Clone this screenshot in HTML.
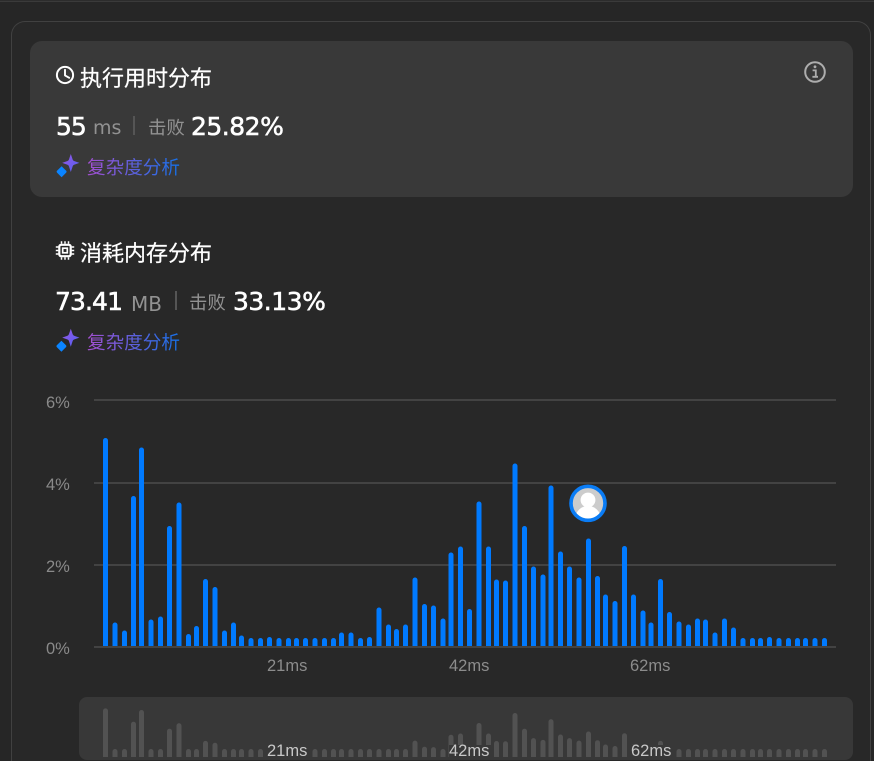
<!DOCTYPE html>
<html><head><meta charset="utf-8">
<style>
html,body{margin:0;padding:0;width:874px;height:761px;overflow:hidden;background:#262626}
body{position:relative;font-family:"Liberation Sans","Noto Sans CJK SC",sans-serif}
.a{position:absolute;white-space:nowrap;line-height:1}
.top{left:0;top:0;width:874px;height:2px;background:#2c2c2c;border-bottom:1px solid #3a3a3a;box-sizing:border-box}
.card{left:11px;top:21px;width:860px;height:740px;box-sizing:border-box;border:1px solid #414141;border-bottom:none;border-radius:14px 14px 0 0;background:#282828}
.panel{left:30px;top:41px;width:823px;height:156px;border-radius:12px;background:#393939}
.t{font-family:"Noto Sans CJK SC",sans-serif;font-size:22px;color:#fff;font-weight:400;-webkit-text-stroke:.2px #fff}
.n{font-family:"DejaVu Sans",sans-serif;font-size:25px;color:#fff;font-weight:400;-webkit-text-stroke:.55px #fff;letter-spacing:-.5px}
.u{font-family:"DejaVu Sans",sans-serif;font-size:19px;color:#929292}
.c{font-family:"Noto Sans CJK SC",sans-serif;font-size:18.4px;color:#929292}
.d{width:2px;height:19px;background:#555}
.g{font-family:"Noto Sans CJK SC",sans-serif;font-size:18.6px;background:linear-gradient(90deg,#a44fd0,#1571e8);-webkit-background-clip:text;background-clip:text;color:transparent}
.y{font-size:16.5px;color:#8a8a8a}
.x{font-size:16.5px;color:#8c8c8c}
.mp{left:79px;top:697px;width:774px;height:63px;border-radius:8px;background:#383838}
.mx{font-size:16.5px;color:#c8c8c8}
.mk{top:745px;width:43px;height:13px;background:#383838}
.l{left:94px;width:742px;height:2px;background:#434343}
svg{position:absolute;left:0;top:0}
#b rect{width:5px;rx:2.5px;fill:#007aff;height:260px}
#m rect{width:5px;rx:2.5px;fill:#525252;height:60px}
</style></head>
<body>
<div class="a top"></div>
<div class="a card"></div>
<div class="a panel"></div>

<svg width="874" height="761" fill="none">
<circle cx="65" cy="75" r="8.1" stroke="#fff" stroke-width="2"/>
<path d="M65 69.8v5.6l4.2 2.4" stroke="#fff" stroke-width="1.9" stroke-linecap="round" stroke-linejoin="round"/>
<circle cx="815" cy="72" r="9.8" stroke="#adadad" stroke-width="2"/>
<circle cx="815" cy="66.8" r="1.4" fill="#adadad"/>
<path d="M812.6 70.4h3.2v6M812.4 76.8h5.6" stroke="#adadad" stroke-width="1.8"/>
<rect x="59.3" y="244.8" width="11.4" height="11.4" rx="1.8" stroke="#fff" stroke-width="2.2"/>
<rect x="62.7" y="248.2" width="4.6" height="4.6" stroke="#fff" stroke-width="1.7"/>
<path d="M61.5 241.2v2.6M65 241.2v2.6M68.5 241.2v2.6M61.5 257.2v2.6M65 257.2v2.6M68.5 257.2v2.6M55.8 247h2.6M55.8 250.5h2.6M55.8 254h2.6M71.6 247h2.6M71.6 250.5h2.6M71.6 254h2.6" stroke="#fff" stroke-width="1.5"/>
<defs><linearGradient id="s" x1="0" y1="0" x2="1" y2="1"><stop offset="0" stop-color="#9a55e6"/><stop offset="1" stop-color="#4f62f2"/></linearGradient></defs>
<path d="M70.8 154l1.9 5.6q.4 1 1.4 1.4l5.3 1.9-5.3 1.9q-1 .4-1.4 1.4l-1.9 5.8-1.9-5.8q-.4-1-1.4-1.4l-5.3-1.9 5.3-1.9q1-.4 1.4-1.4z" fill="url(#s)"/>
<path d="M61.6 166.2l4.6 4.6q.9.9 0 1.8l-4.6 4.6-4.6-4.6q-.9-.9 0-1.8z" fill="#0a84ff"/>
<path d="M70.8 328.7l1.9 5.6q.4 1 1.4 1.4l5.3 1.9-5.3 1.9q-1 .4-1.4 1.4l-1.9 5.8-1.9-5.8q-.4-1-1.4-1.4l-5.3-1.9 5.3-1.9q1-.4 1.4-1.4z" fill="url(#s)"/>
<path d="M61.4 340.7l4.6 4.6q.9.9 0 1.8l-4.6 4.6-4.6-4.6q-.9-.9 0-1.8z" fill="#0a84ff"/>
</svg>

<div class="a t" style="left:80px;top:66px">执行用时分布</div>
<div class="a n" style="left:56px;top:114px;letter-spacing:-1px">55</div>
<div class="a u" style="left:93px;top:119px">ms</div>
<div class="a d" style="left:133px;top:116px"></div>
<div class="a c" style="left:148px;top:118px">击败</div>
<div class="a n" style="left:191px;top:114px">25.82%</div>
<div class="a g" style="left:87px;top:158px">复杂度分析</div>

<div class="a t" style="left:80px;top:241px">消耗内存分布</div>
<div class="a n" style="left:55px;top:289px;letter-spacing:-.9px">73.41</div>
<div class="a u" style="left:131px;top:294px;font-size:20px">MB</div>
<div class="a d" style="left:175px;top:291px"></div>
<div class="a c" style="left:189px;top:293px">击败</div>
<div class="a n" style="left:233px;top:289px">33.13%</div>
<div class="a g" style="left:87px;top:333px">复杂度分析</div>

<div class="a l" style="top:399px"></div>
<div class="a l" style="top:482px"></div>
<div class="a l" style="top:564px"></div>
<div class="a l" style="top:645.5px"></div>
<div class="a y" style="left:46px;top:395px">6%</div>
<div class="a y" style="left:46px;top:477px">4%</div>
<div class="a y" style="left:46px;top:559px">2%</div>
<div class="a y" style="left:46px;top:641px">0%</div>

<svg id="b" width="874" height="646">
<rect x="103" y="438"/><rect x="112.5" y="622.5"/><rect x="122" y="630.5"/><rect x="131" y="496"/><rect x="139" y="447.5"/><rect x="148.5" y="619.5"/><rect x="158" y="616.5"/><rect x="167" y="526"/><rect x="176.5" y="502.5"/><rect x="186" y="634"/><rect x="194" y="626"/><rect x="203" y="579"/><rect x="212.5" y="587"/><rect x="222" y="630.5"/><rect x="231" y="622.5"/><rect x="239" y="635.5"/><rect x="248.5" y="638"/><rect x="258" y="638"/><rect x="267" y="637"/><rect x="276.5" y="638"/><rect x="286" y="638"/><rect x="294" y="638"/><rect x="303" y="638"/><rect x="312.5" y="638"/><rect x="322" y="638"/><rect x="331" y="638"/><rect x="339" y="632.5"/><rect x="348.5" y="632.5"/><rect x="358" y="638"/><rect x="367" y="637"/><rect x="376.5" y="607.5"/><rect x="386" y="624.5"/><rect x="394" y="629"/><rect x="403" y="624.5"/><rect x="412.5" y="577.5"/><rect x="422" y="604"/><rect x="431" y="605.5"/><rect x="440.5" y="618.5"/><rect x="448.5" y="552.5"/><rect x="458" y="546.5"/><rect x="467" y="609"/><rect x="476.5" y="501.5"/><rect x="486" y="546.5"/><rect x="494" y="579.5"/><rect x="503" y="580.5"/><rect x="512.5" y="463.5"/><rect x="522" y="526"/><rect x="531" y="566.5"/><rect x="540.5" y="574.5"/><rect x="548.5" y="485.5"/><rect x="558" y="551.5"/><rect x="567" y="566.5"/><rect x="576.5" y="577.5"/><rect x="586" y="538.5"/><rect x="595" y="576"/><rect x="603" y="594.5"/><rect x="612.5" y="601"/><rect x="622" y="546"/><rect x="631" y="594.5"/><rect x="640.5" y="610.5"/><rect x="648.5" y="622.5"/><rect x="658" y="579"/><rect x="667" y="612"/><rect x="676.5" y="621.5"/><rect x="686" y="624.5"/><rect x="695" y="618.5"/><rect x="703" y="619.5"/><rect x="712.5" y="632.5"/><rect x="722" y="618.5"/><rect x="731" y="627.5"/><rect x="740.5" y="638"/><rect x="750" y="638"/><rect x="758" y="638"/><rect x="767" y="637"/><rect x="776.5" y="638"/><rect x="786" y="638"/><rect x="795" y="638"/><rect x="803" y="638"/><rect x="812.5" y="638"/><rect x="822" y="638"/>
</svg>

<svg width="874" height="761">
<circle cx="588" cy="503.3" r="17" fill="#ccc" stroke="#0a7cf5" stroke-width="3.6"/>
<clipPath id="av"><circle cx="588" cy="503.3" r="15.2"/></clipPath>
<g clip-path="url(#av)" fill="#fff"><circle cx="588" cy="500" r="7.4"/><ellipse cx="588" cy="518" rx="12.5" ry="12"/></g>
</svg>

<div class="a x" style="left:267px;top:658px">21ms</div>
<div class="a x" style="left:449px;top:658px">42ms</div>
<div class="a x" style="left:630px;top:658px">62ms</div>

<div class="a mp"></div>
<svg id="m" width="874" height="757">
<rect x="103" y="708.4"/><rect x="112.5" y="749"/><rect x="122" y="749"/><rect x="131" y="721.7"/><rect x="139" y="710"/><rect x="148.5" y="749"/><rect x="158" y="749"/><rect x="167" y="728.7"/><rect x="176.5" y="723.3"/><rect x="186" y="749"/><rect x="194" y="749"/><rect x="203" y="740.9"/><rect x="212.5" y="742.8"/><rect x="222" y="749"/><rect x="231" y="749"/><rect x="239" y="749"/><rect x="248.5" y="749"/><rect x="258" y="749"/><rect x="267" y="749"/><rect x="276.5" y="749"/><rect x="286" y="749"/><rect x="294" y="749"/><rect x="303" y="749"/><rect x="312.5" y="749"/><rect x="322" y="749"/><rect x="331" y="749"/><rect x="339" y="749"/><rect x="348.5" y="749"/><rect x="358" y="749"/><rect x="367" y="749"/><rect x="376.5" y="749"/><rect x="386" y="749"/><rect x="394" y="749"/><rect x="403" y="749"/><rect x="412.5" y="740.6"/><rect x="422" y="746.7"/><rect x="431" y="747.1"/><rect x="440.5" y="749"/><rect x="448.5" y="734.8"/><rect x="458" y="733.5"/><rect x="467" y="747.8"/><rect x="476.5" y="723"/><rect x="486" y="733.5"/><rect x="494" y="741"/><rect x="503" y="741.3"/><rect x="512.5" y="713"/><rect x="522" y="728.7"/><rect x="531" y="738.1"/><rect x="540.5" y="739.9"/><rect x="548.5" y="719.3"/><rect x="558" y="734.5"/><rect x="567" y="738.1"/><rect x="576.5" y="740.6"/><rect x="586" y="731.5"/><rect x="595" y="740.2"/><rect x="603" y="744.5"/><rect x="612.5" y="746"/><rect x="622" y="733.3"/><rect x="631" y="744.5"/><rect x="640.5" y="748.1"/><rect x="648.5" y="749"/><rect x="658" y="740.9"/><rect x="667" y="748.5"/><rect x="676.5" y="749"/><rect x="686" y="749"/><rect x="695" y="749"/><rect x="703" y="749"/><rect x="712.5" y="749"/><rect x="722" y="749"/><rect x="731" y="749"/><rect x="740.5" y="749"/><rect x="750" y="749"/><rect x="758" y="749"/><rect x="767" y="749"/><rect x="776.5" y="749"/><rect x="786" y="749"/><rect x="795" y="749"/><rect x="803" y="749"/><rect x="812.5" y="749"/><rect x="822" y="749"/>
</svg>
<div class="a mk" style="left:267px"></div>
<div class="a mk" style="left:449px"></div>
<div class="a mk" style="left:631px"></div>
<div class="a mx" style="left:267px;top:743px">21ms</div>
<div class="a mx" style="left:449px;top:743px">42ms</div>
<div class="a mx" style="left:631px;top:743px">62ms</div>
</body></html>
